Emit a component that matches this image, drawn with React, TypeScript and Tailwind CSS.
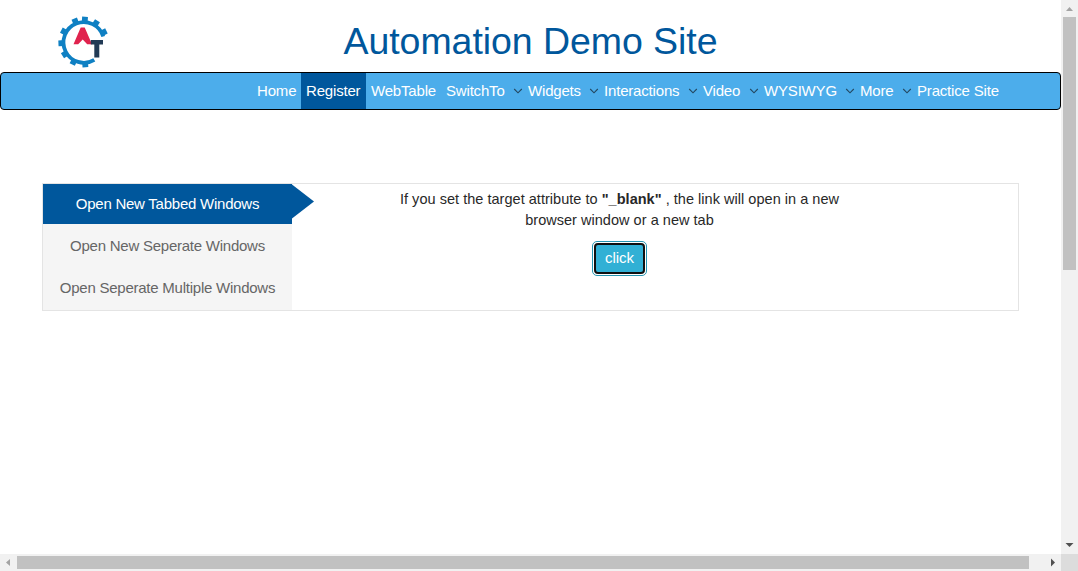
import React from "react";

const items = [
  { label: "Home", box: "w-[49px]" },
  { label: "Register", box: "w-[65px] bg-[#00579c]" },
  { label: "WebTable", box: "w-[75px]" },
  { label: "SwitchTo", box: "w-[82px]", menu: true },
  { label: "Widgets", box: "w-[76px]", menu: true },
  { label: "Interactions", box: "w-[99px]", menu: true },
  { label: "Video", box: "w-[61px]", menu: true },
  { label: "WYSIWYG", box: "w-[96px]", menu: true },
  { label: "More", box: "w-[57px]", menu: true },
  { label: "Practice Site", box: "w-[92px]" },
];

const teeth = [86, 117, 147, 177, 208, 248, 273, 303, 334];

function Logo() {
  return (
    <svg className="block h-[56px] w-[52px]" viewBox="56 14 52 56">
      <g fill="none" stroke="#0f80c3">
        <path d="M103.2 36.5A20.3 20.3 0 1 0 94.3 59.8" strokeWidth="3.8" />
        {teeth.map((a) => (
          <path key={a} d="M103 42H109" strokeWidth="5.8" transform={`rotate(${a} 83.7 42)`} />
        ))}
      </g>
      <path d="M80.7 27.5H84.7L92 44.2H87.2L82.7 39.4L78.2 44.2H73.5Z" fill="#e0234e" />
      <path d="M90.8 40H103V44.6H99.3V57.4H94.3V44.6H90.8Z" fill="#213a55" />
    </svg>
  );
}

function Nav() {
  return (
    <nav className="flex h-[38px] rounded border border-black bg-[#4cadeb] pl-[251px] tracking-[-0.18px] text-white">
      <div className="-ml-px flex pl-px">
        {items.map((item) => (
          <a key={item.label} className={`flex h-9 shrink-0 items-center justify-between pl-[5px] leading-9 whitespace-nowrap ${item.box}`}>
            {item.label}
            {item.menu && (
              <svg className="h-[6px] w-[10px]" viewBox="0 0 10 6" fill="none" stroke="#244861" strokeWidth="1.1">
                <path d="M1.2 1L5 4.8L8.8 1" />
              </svg>
            )}
          </a>
        ))}
      </div>
    </nav>
  );
}

export default function App() {
  return (
    <div className="grid h-[571px] w-[1078px] grid-cols-[1061px_17px] grid-rows-[554px_17px] overflow-hidden bg-white font-['Liberation_Sans',Arial,sans-serif] text-[15px] text-[#282828]">
      <main>
        <header className="flex h-[72px] pt-[14px] pl-[56px]">
          <Logo />
          <h1 className="ml-[235.5px] text-[37.5px] leading-[54px] tracking-[-0.06px] whitespace-nowrap text-[#00579c]">Automation Demo Site</h1>
        </header>
        <Nav />
        <section className="mt-[73px] ml-[42px] flex h-[128px] w-[977px] border border-[#e4e4e4]">
          <div className="h-[126px] w-[249px] shrink-0 bg-[#f5f5f5] text-center tracking-[-0.24px] text-[#666]">
            <div className="relative h-10 bg-[#00579c] leading-10 text-white">
              Open New Tabbed Windows
              <svg className="absolute top-0 left-[249px] h-[35px] w-[22px]" viewBox="0 0 22 35" fill="#00579c">
                <path d="M0 0.5L22 17.5L0 34.5Z" />
              </svg>
            </div>
            <div className="mt-[2px] h-10 leading-10">Open New Seperate Windows</div>
            <div className="mt-[2px] h-10 leading-10">Open Seperate Multiple Windows</div>
          </div>
          <div className="ml-[97px] flex w-[461px] flex-col items-center pt-[5px] text-center text-[14.5px] leading-[21px]">
            <p className="tracking-[0.03px] whitespace-nowrap">
              If you set the target attribute to <b>"_blank"</b> , the link will open in a new
              <br />
              browser window or a new tab
            </p>
            <button className="mt-[10px] flex h-[35px] w-[55px] items-center justify-center rounded-[5px] border border-[#2495b2] bg-white p-px">
              <span className="flex h-[31px] w-[51px] items-center justify-center rounded-[4px] border-2 border-[#101010] bg-[#31b0d5] pb-[2px] text-[15px] text-white">click</span>
            </button>
          </div>
        </section>
      </main>
      <aside className="flex flex-col items-center bg-[#f1f1f1]">
        <svg className="h-[17px] w-[17px] shrink-0" viewBox="0 0 17 17" fill="#a3a3a3"><path d="M5 11L8.5 7L12 11Z" /></svg>
        <div className="h-[253px] w-[13px] bg-[#c1c1c1]" />
        <svg className="mt-auto h-[17px] w-[17px] shrink-0" viewBox="0 0 17 17" fill="#505050"><path d="M4.5 6L8.5 10L12.5 6Z" /></svg>
      </aside>
      <footer className="flex items-center bg-[#f1f1f1]">
        <svg className="h-[17px] w-[17px] shrink-0" viewBox="0 0 17 17" fill="#a3a3a3"><path d="M10 5L6 8.5L10 12Z" /></svg>
        <div className="h-[13px] w-[1012px] bg-[#c1c1c1]" />
        <svg className="ml-auto h-[17px] w-[17px] shrink-0" viewBox="0 0 17 17" fill="#505050"><path d="M7 4.5L11 8.5L7 12.5Z" /></svg>
      </footer>
      <div className="bg-[#dcdcdc]" />
    </div>
  );
}
